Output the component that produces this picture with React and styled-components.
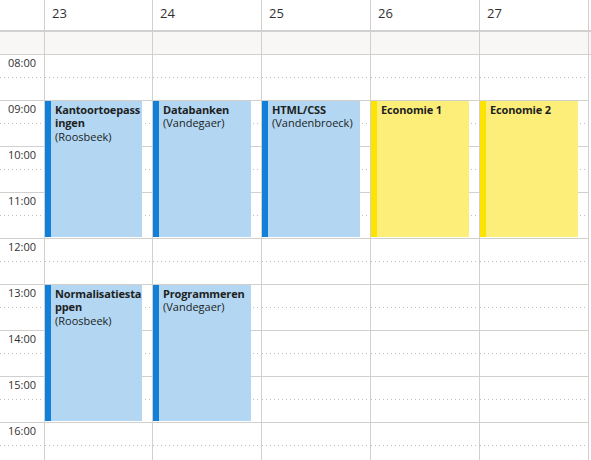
import React from 'react'
import styled, { createGlobalStyle } from 'styled-components'

const COLS = '45px 108px repeat(4, 109px) 1fr'
const LINE = '#d2d0ce'
const DOTS = '#c1bfbd'
const SLOT = 23
const START_HOUR = 8
const HOURS = 9

const GlobalStyle = createGlobalStyle`
  html, body {
    margin: 0;
    padding: 0;
    overflow: hidden;
    background: #fff;
  }
  body {
    font-family: 'Open Sans', 'Noto Sans', sans-serif;
    color: #323130;
  }
`

const Calendar = styled.div`
  width: 591px;
  height: 460px;
  overflow: hidden;
`
const HeaderRow = styled.div`
  display: grid;
  grid-template-columns: ${COLS};
  height: 32px;
  box-sizing: border-box;
  border-bottom: 2px solid ${LINE};
`
const HeaderCell = styled.div`
  border-right: ${({ $filler }) => ($filler ? 'none' : `1px solid ${LINE}`)};
  padding: 4px 0 0 7px;
  font-size: 13px;
  line-height: 18px;
  color: #323130;
`
const AllDayRow = styled.div`
  display: grid;
  grid-template-columns: ${COLS};
  height: 23px;
  box-sizing: border-box;
  background: #f8f7f6;
  border-bottom: 1px solid ${LINE};
`
const AllDayCell = styled.div`
  border-right: ${({ $filler }) => ($filler ? 'none' : `1px solid ${LINE}`)};
`
const Body = styled.div`
  display: grid;
  grid-template-columns: ${COLS};
`
const Column = styled.div`
  display: grid;
  grid-template-rows: repeat(${HOURS * 2}, ${SLOT}px);
  border-right: 1px solid ${LINE};
`
const Slot = styled.div`
  grid-column: 1;
  grid-row: ${({ $row }) => $row};
  box-sizing: border-box;
  ${({ $half }) =>
    $half
      ? `background: linear-gradient(to right, ${DOTS} 1px, transparent 1px) left bottom / 4px 1px repeat-x;`
      : `border-bottom: 1px solid ${LINE};`}
`
const TimeLabel = styled.div`
  padding: 1px 0 0 8px;
  font-size: 11px;
  line-height: 14px;
  color: #323130;
`
const Event = styled.div`
  grid-column: 1;
  grid-row: ${({ $row }) => $row} / span ${({ $span }) => $span};
  margin: 0 10px 2px 0;
  padding: 2px 0 0 4px;
  background: ${({ $fill }) => $fill};
  border-left: 6px solid ${({ $bar }) => $bar};
  overflow: hidden;
  font-size: 11px;
  line-height: 13.3px;
  color: #201f1e;
  word-break: break-all;
`
const Title = styled.div`
  font-weight: 700;
  letter-spacing: -0.15px;
`
const Sub = styled.div`
  font-weight: 400;
`

const palette = {
  blue: { fill: '#b3d6f2', bar: '#1280d8' },
  yellow: { fill: '#fdee7a', bar: '#fde300' },
}

const days = [
  {
    date: 23,
    events: [
      { title: 'Kantoortoepassingen', sub: '(Roosbeek)', start: 9, end: 12, color: 'blue' },
      { title: 'Normalisatiestappen', sub: '(Roosbeek)', start: 13, end: 16, color: 'blue' },
    ],
  },
  {
    date: 24,
    events: [
      { title: 'Databanken', sub: '(Vandegaer)', start: 9, end: 12, color: 'blue' },
      { title: 'Programmeren', sub: '(Vandegaer)', start: 13, end: 16, color: 'blue' },
    ],
  },
  {
    date: 25,
    events: [{ title: 'HTML/CSS', sub: '(Vandenbroeck)', start: 9, end: 12, color: 'blue' }],
  },
  { date: 26, events: [{ title: 'Economie 1', start: 9, end: 12, color: 'yellow' }] },
  { date: 27, events: [{ title: 'Economie 2', start: 9, end: 12, color: 'yellow' }] },
]

const slots = Array.from({ length: HOURS * 2 }, (_, i) => ({
  row: i + 1,
  half: i % 2 === 0,
  hour: START_HOUR + i / 2,
}))

const pad = (n) => String(n).padStart(2, '0')

export default function App() {
  return (
    <Calendar>
      <GlobalStyle />
      <HeaderRow>
        <HeaderCell />
        {days.map((d) => (
          <HeaderCell key={d.date}>{d.date}</HeaderCell>
        ))}
        <HeaderCell $filler />
      </HeaderRow>
      <AllDayRow>
        <AllDayCell />
        {days.map((d) => (
          <AllDayCell key={d.date} />
        ))}
        <AllDayCell $filler />
      </AllDayRow>
      <Body>
        <Column>
          {slots.map((s) => (
            <Slot key={s.row} $row={s.row} $half={s.half}>
              {s.half && <TimeLabel>{pad(s.hour)}:00</TimeLabel>}
            </Slot>
          ))}
        </Column>
        {days.map((d) => (
          <Column key={d.date}>
            {slots.map((s) => (
              <Slot key={s.row} $row={s.row} $half={s.half} />
            ))}
            {d.events.map((e) => {
              const c = palette[e.color]
              return (
                <Event
                  key={e.title}
                  $row={(e.start - START_HOUR) * 2 + 1}
                  $span={(e.end - e.start) * 2}
                  $fill={c.fill}
                  $bar={c.bar}
                >
                  <Title>{e.title}</Title>
                  {e.sub && <Sub>{e.sub}</Sub>}
                </Event>
              )
            })}
          </Column>
        ))}
        <div />
      </Body>
    </Calendar>
  )
}
